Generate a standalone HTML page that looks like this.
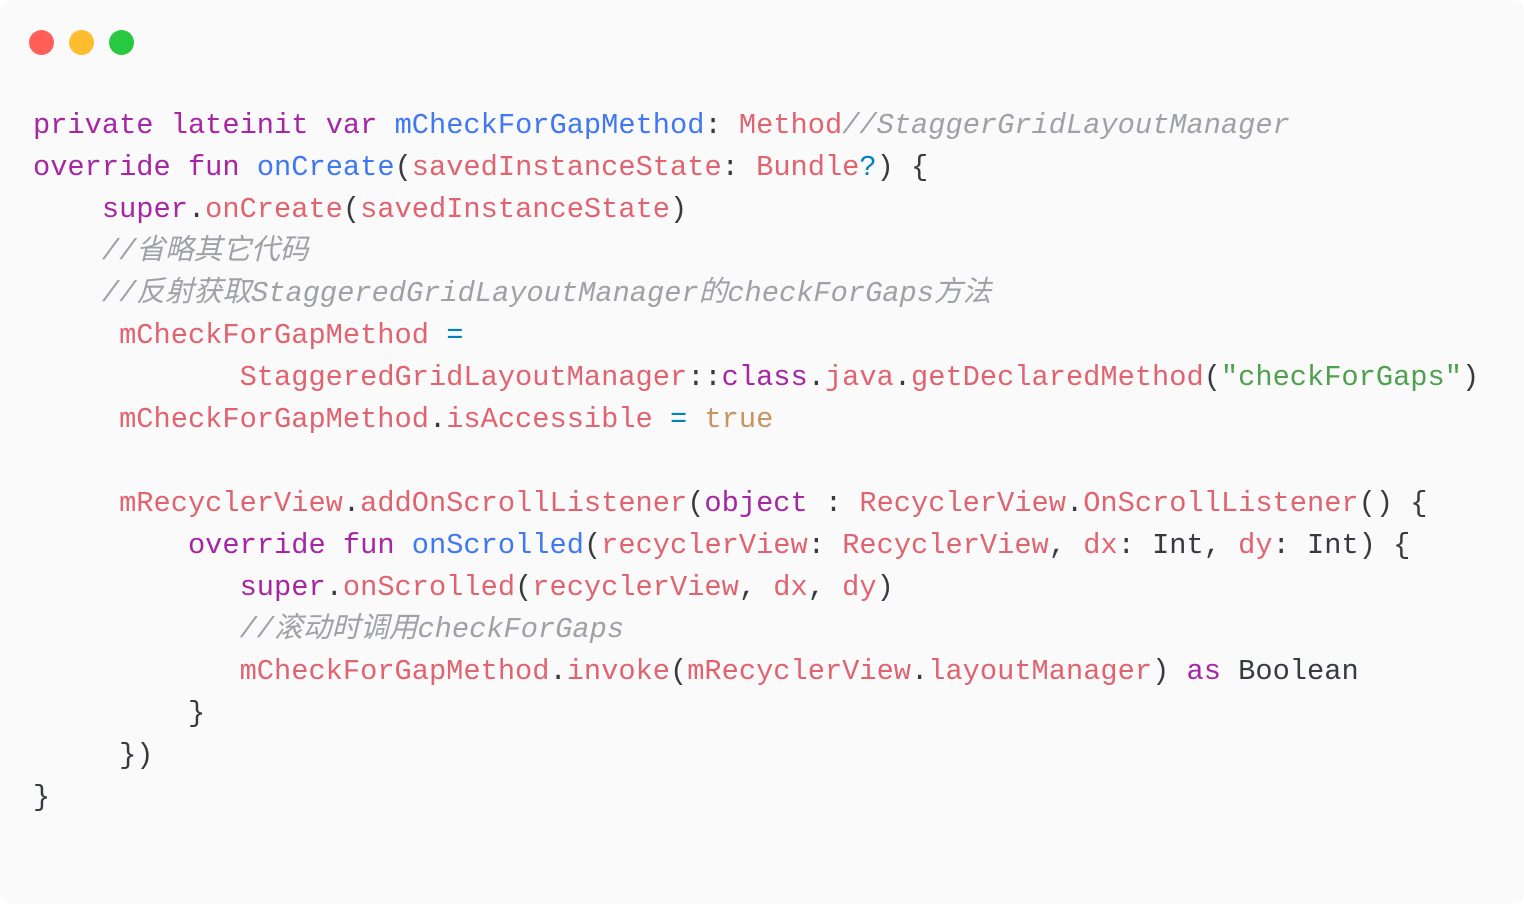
<!DOCTYPE html>
<html><head><meta charset="utf-8"><style>
html,body{margin:0;padding:0;width:1524px;height:904px;overflow:hidden;background:#fff}
.card{position:absolute;left:0;top:0;width:1524px;height:904px;background:#fafafa;border-radius:12px}
.dot{position:absolute;top:30px;width:25px;height:25px;border-radius:50%}
pre{position:absolute;left:33px;top:105px;margin:0;font-family:"Liberation Mono","Noto Sans CJK SC",monospace;font-size:28.7px;line-height:42px;color:#383a42;white-space:pre}
.k{color:#a626a4}.f{color:#4078f2}.r{color:#e06470}.s{color:#50a14f}.o{color:#c99560}.c{color:#a0a1a7;font-style:italic}.e{color:#0184bc}
</style></head><body><div class="card">
<div class="dot" style="left:29px;background:#ff5f57"></div>
<div class="dot" style="left:69px;background:#febc2e"></div>
<div class="dot" style="left:109px;background:#28c840"></div>
<pre><span class="k">private</span> <span class="k">lateinit</span> <span class="k">var</span> <span class="f">mCheckForGapMethod</span>: <span class="r">Method</span><span class="c">//StaggerGridLayoutManager</span>
<span class="k">override</span> <span class="k">fun</span> <span class="f">onCreate</span>(<span class="r">savedInstanceState</span>: <span class="r">Bundle</span><span class="e">?</span>) {
    <span class="k">super</span>.<span class="r">onCreate</span>(<span class="r">savedInstanceState</span>)
    <span class="c">//省略其它代码</span>
    <span class="c">//反射获取StaggeredGridLayoutManager的checkForGaps方法</span>
     <span class="r">mCheckForGapMethod</span> <span class="e">=</span>
            <span class="r">StaggeredGridLayoutManager</span>::<span class="k">class</span>.<span class="r">java</span>.<span class="r">getDeclaredMethod</span>(<span class="s">"checkForGaps"</span>)
     <span class="r">mCheckForGapMethod</span>.<span class="r">isAccessible</span> <span class="e">=</span> <span class="o">true</span>

     <span class="r">mRecyclerView</span>.<span class="r">addOnScrollListener</span>(<span class="k">object</span> : <span class="r">RecyclerView</span>.<span class="r">OnScrollListener</span>() {
         <span class="k">override</span> <span class="k">fun</span> <span class="f">onScrolled</span>(<span class="r">recyclerView</span>: <span class="r">RecyclerView</span>, <span class="r">dx</span>: Int, <span class="r">dy</span>: Int) {
            <span class="k">super</span>.<span class="r">onScrolled</span>(<span class="r">recyclerView</span>, <span class="r">dx</span>, <span class="r">dy</span>)
            <span class="c">//滚动时调用checkForGaps</span>
            <span class="r">mCheckForGapMethod</span>.<span class="r">invoke</span>(<span class="r">mRecyclerView</span>.<span class="r">layoutManager</span>) <span class="k">as</span> Boolean
         }
     })
}</pre>
</div></body></html>
